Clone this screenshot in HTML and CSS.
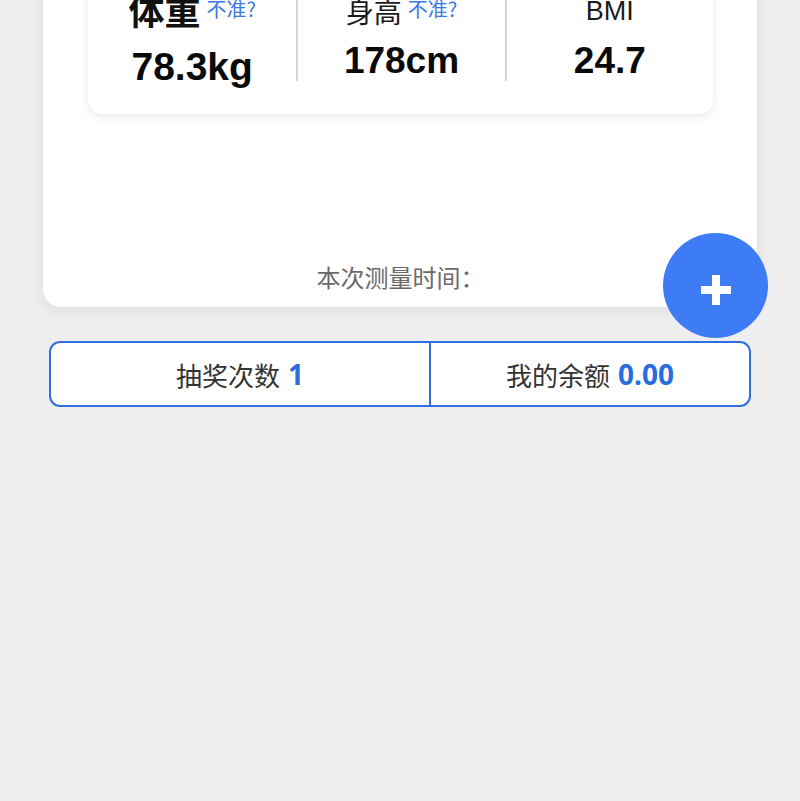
FILE: index.html
```html
<!DOCTYPE html>
<html lang="zh">
<head>
<meta charset="utf-8">
<title>体重记录</title>
<link rel="stylesheet" href="styles.css">
</head>
<body>
<div class="page">
  <section class="card">
    <div class="stats-card">
      <div class="stats">
        <div class="stat stat--main">
          <div class="stat-label">体重<span class="stat-fix">不准?</span></div>
          <div class="stat-value">78.3kg</div>
        </div>
        <div class="stat">
          <div class="stat-label">身高<span class="stat-fix">不准?</span></div>
          <div class="stat-value">178cm</div>
        </div>
        <div class="stat">
          <div class="stat-label stat-label--latin">BMI</div>
          <div class="stat-value">24.7</div>
        </div>
      </div>
    </div>
    <p class="measure-time">本次测量时间：</p>
    <button class="fab" type="button" aria-label="添加">
      <svg viewBox="0 0 30 30" width="30" height="30"><rect x="11" y="0" width="8" height="30" fill="#fff"/><rect x="0" y="11" width="30" height="8" fill="#fff"/></svg>
    </button>
  </section>
  <div class="summary">
    <div class="summary-item">抽奖次数 <b class="summary-num">1</b></div>
    <div class="summary-item">我的余额 <b class="summary-num">0.00</b></div>
  </div>
</div>
</body>
</html>
```

FILE: styles.css
```css
html, body {
  margin: 0;
  padding: 0;
  background: #eeeeee;
  font-family: "Noto Sans CJK SC", "Noto Sans", sans-serif;
  overflow: hidden;
}

.page {
  padding: 0 43px;
}

.card {
  position: relative;
  margin-top: -57px;
  background: #fff;
  border-radius: 18px;
  padding: 30px 44px 15px 45px;
  box-shadow: 0 3px 14px rgba(0, 0, 0, 0.07);
}

.stats-card {
  background: #fff;
  border-radius: 14px;
  padding: 20px 0 27px;
  box-shadow: 0 3px 10px rgba(0, 0, 0, 0.09);
}

.stats {
  display: grid;
  grid-template-columns: 1fr 1fr 1fr;
  align-items: start;
}

.stat {
  text-align: center;
  border-left: 2px solid #d6d6d6;
}

.stat--main {
  border-left: none;
}

.stat-label {
  font-size: 28px;
  line-height: 36px;
  color: #1a1a1a;
  white-space: nowrap;
}

.stat--main .stat-label {
  font-size: 36px;
  line-height: 32px;
  font-weight: 700;
  color: #111;
}

.stat-label--latin {
  font-family: "Liberation Sans", sans-serif;
  font-size: 27px;
}

.stat-fix {
  font-size: 20px;
  line-height: 32px;
  font-weight: 400;
  color: #3a78e2;
  vertical-align: top;
  margin-left: 6px;
}

.stat-value {
  margin-top: 12px;
  font-family: "Liberation Sans", sans-serif;
  font-weight: 700;
  font-size: 37px;
  line-height: 40px;
  color: #0a0a0a;
}

.stat--main .stat-value {
  margin-top: 22px;
  font-size: 39px;
}

.measure-time {
  margin: 148px 0 0;
  text-align: center;
  font-size: 24px;
  line-height: 30px;
  color: #6a6a6a;
}

.fab {
  position: absolute;
  right: -11px;
  bottom: -31px;
  width: 105px;
  height: 105px;
  border: none;
  border-radius: 50%;
  background: #3d7cf4;
  padding: 0;
  display: flex;
  align-items: center;
  justify-content: center;
  padding-top: 8px;
}

.summary {
  margin: 34px 6px 0;
  height: 66px;
  box-sizing: border-box;
  border: 2px solid #2f6fe0;
  border-radius: 11px;
  background: #fff;
  display: grid;
  grid-template-columns: 377fr 319fr;
}

.summary-item {
  display: flex;
  align-items: center;
  justify-content: center;
  font-size: 26px;
  color: #333;
}

.summary-item + .summary-item {
  border-left: 2px solid #2f6fe0;
}

.summary-num {
  font-family: "Noto Sans", sans-serif;
  font-weight: 700;
  font-size: 28px;
  color: #2a6be0;
  margin-left: 8px;
}
```
